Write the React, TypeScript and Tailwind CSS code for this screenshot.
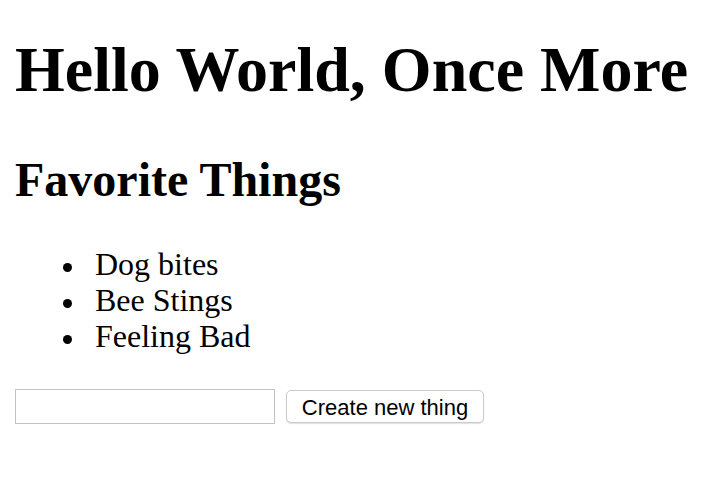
import { useState } from 'react';

const things = ['Dog bites', 'Bee Stings', 'Feeling Bad'];

export default function App() {
  const [text, setText] = useState('');

  return (
    <div className="px-[15px] pt-[34px] text-black bg-white min-h-[484px]" style={{ fontFamily: '"Liberation Serif", "Times New Roman", serif' }}>
      <h1 className="text-[64px] leading-[72px] font-bold whitespace-nowrap">Hello World, Once More</h1>
      <h2 className="mt-[46px] text-[48px] leading-[55px] font-bold">Favorite Things</h2>
      <ul className="mt-[39px] pl-[48px] text-[32px] leading-[36px]">
        {things.map((t) => (
          <li key={t} className="flex items-start">
            <span className="mt-[17px] mr-[23px] w-[9px] h-[9px] rounded-full bg-black shrink-0" />
            <span>{t}</span>
          </li>
        ))}
      </ul>
      <div className="mt-[35px] flex items-center">
        <input
          value={text}
          onChange={(e) => setText(e.target.value)}
          className="w-[260px] h-[35px] border border-[#c2c2c2] bg-white outline-none px-1"
        />
        <button
          type="button"
          className="ml-[11px] w-[198px] h-[33px] pt-[3px] rounded-[5px] border border-[#cbcbcb] bg-white shadow-[0_1px_1px_rgba(0,0,0,0.12)] text-[22px] leading-none text-black"
          style={{ fontFamily: '"Liberation Sans", Arial, sans-serif' }}
        >
          Create new thing
        </button>
      </div>
    </div>
  );
}
